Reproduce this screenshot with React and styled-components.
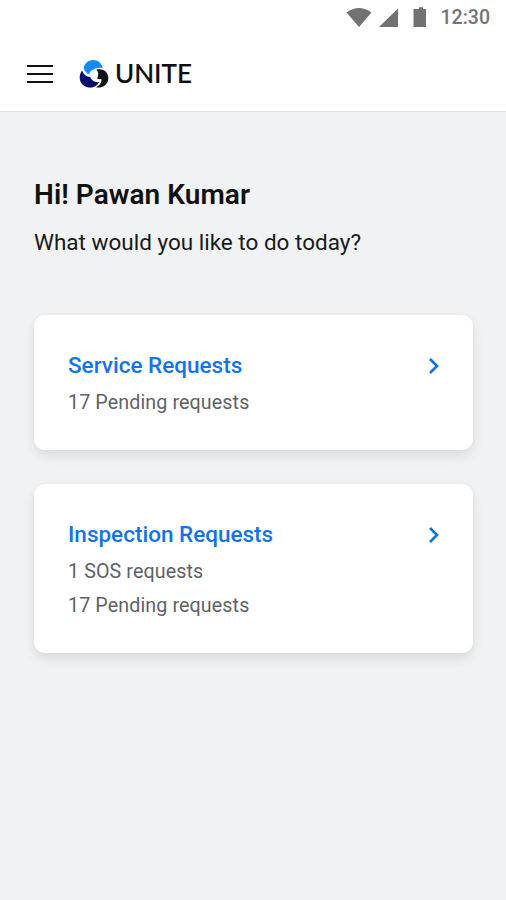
import React from 'react';
import styled, { createGlobalStyle } from 'styled-components';

const GlobalStyle = createGlobalStyle`
  * {
    box-sizing: border-box;
  }
  body {
    margin: 0;
    background-color: #f0f2f4;
    font-family: Roboto, "Liberation Sans", sans-serif;
  }
`;

const Screen = styled.div`
  width: 506px;
  height: 900px;
  overflow: hidden;
  background-color: #f0f2f4;
`;

const Top = styled.header`
  height: 112px;
  background-color: white;
  border-bottom: 1px solid #dfe1e3;
`;

const StatusBar = styled.div`
  display: flex;
  justify-content: flex-end;
  height: 36px;
  padding-right: 16px;
  color: #757575;
`;

const StatusIcons = styled.svg`
  width: 84px;
  height: 36px;
  margin-right: 11px;
  fill: #727272;
`;

const Clock = styled.span`
  font-size: 19.5px;
  font-weight: 500;
  line-height: 36px;
`;

const NavBar = styled.div`
  display: flex;
  align-items: center;
  height: 75px;
  padding-left: 27px;
`;

const MenuButton = styled.button`
  display: flex;
  flex-direction: column;
  justify-content: space-between;
  width: 26px;
  height: 18px;
  margin: 0 26px 0 0;
  padding: 0;
  border: none;
  background: none;
  cursor: pointer;
`;

const MenuLine = styled.span`
  height: 2px;
  background-color: #111;
`;

const Brand = styled.span`
  margin-left: 6px;
  padding-bottom: 2px;
  color: #0d0d0d;
  font-family: Lato, sans-serif;
  font-size: 26px;
  font-weight: 500;
  line-height: 30px;
  -webkit-text-stroke: 0.2px #0d0d0d;
`;

const Content = styled.main`
  padding: 64px 33px 0 34px;
`;

const Title = styled.h1`
  margin: 0;
  color: #111;
  font-size: 28px;
  font-weight: 600;
  line-height: 38px;
  letter-spacing: 0.06px;
`;

const Subtitle = styled.p`
  margin: 11px 0 56px;
  color: #191919;
  font-size: 22.5px;
  font-weight: 400;
  line-height: 34px;
`;

const Card = styled.section`
  display: flex;
  justify-content: space-between;
  margin-bottom: 34px;
  padding: 33px 32px 30px 34px;
  border-radius: 11px;
  background-color: white;
  box-shadow: 0 6px 12px rgba(0, 0, 0, 0.09), 0 0 4px rgba(0, 0, 0, 0.04);
`;

const CardTitle = styled.h2`
  margin: 0 0 3px;
  color: #1273ee;
  font-size: 22.5px;
  font-weight: 500;
  line-height: 35px;
`;

const CardText = styled.p`
  margin: 0;
  color: #5f6368;
  font-size: 19.7px;
  font-weight: 400;
  line-height: 34px;
  letter-spacing: 0.1px;
`;

const Arrow = styled.svg`
  width: 13px;
  height: 18px;
  margin-top: 9px;
  fill: none;
  stroke: #0b72e0;
  stroke-width: 2.6;
`;

const cards = [
  { title: 'Service Requests', lines: ['17 Pending requests'] },
  { title: 'Inspection Requests', lines: ['1 SOS requests', '17 Pending requests'] },
];

function Logo() {
  return (
    <svg width="30" height="30" viewBox="0 0 30 30">
      <path fill="#168bf7" d="M4.800 9.800C5 4.800 9 1 14 1c5 0 9 3.300 9.800 8.300-4-1-7.300-.3-9.600 1.500-1.700 1.300-2.600 3-3 5C7.800 14.800 6 12.800 4.800 9.800z" />
      <path fill="#07106e" d="M3 11.500c1.600 4 4.500 6.200 8.200 6.600 1.500 3.700 4.700 5.600 9.200 4.900C18 27 14 29.200 9.500 28.500 1.500 27.300-2 18.500 3 11.500z" />
      <path fill="#111417" d="M17.300 10.600C23.500 8.800 29.100 12.500 29.300 18.700c.2 6.300-5 10.900-12.300 9.600 4.200-2.300 6-5.100 5.400-8.300-1.600.3-3 .1-4.300-.5 1.700-3 1.700-6.200-.8-8.900z" />
      <circle fill="white" cx="14.300" cy="15" r="3.800" />
    </svg>
  );
}

function RequestCard({ title, lines }) {
  return (
    <Card>
      <div>
        <CardTitle>{title}</CardTitle>
        {lines.map((line) => (
          <CardText key={line}>{line}</CardText>
        ))}
      </div>
      <Arrow viewBox="0 0 13 18">
        <path d="M2 2l7 7-7 7" />
      </Arrow>
    </Card>
  );
}

function App() {
  return (
    <Screen>
      <GlobalStyle />
      <Top>
        <StatusBar>
          <StatusIcons viewBox="0 0 84 36">
            <path d="M.500 12.500Q13 3.500 25.500 12.500L13 27z" />
            <path d="M52 8.500v18.500H33z" />
            <path d="M70 9h3V7.200h4V9h3v18H67.500V9z" />
          </StatusIcons>
          <Clock>12:30</Clock>
        </StatusBar>
        <NavBar>
          <MenuButton aria-label="Menu">
            <MenuLine />
            <MenuLine />
            <MenuLine />
          </MenuButton>
          <Logo />
          <Brand>UNITE</Brand>
        </NavBar>
      </Top>
      <Content>
        <Title>Hi! Pawan Kumar</Title>
        <Subtitle>What would you like to do today?</Subtitle>
        {cards.map((card) => (
          <RequestCard key={card.title} title={card.title} lines={card.lines} />
        ))}
      </Content>
    </Screen>
  );
}

export default App;
